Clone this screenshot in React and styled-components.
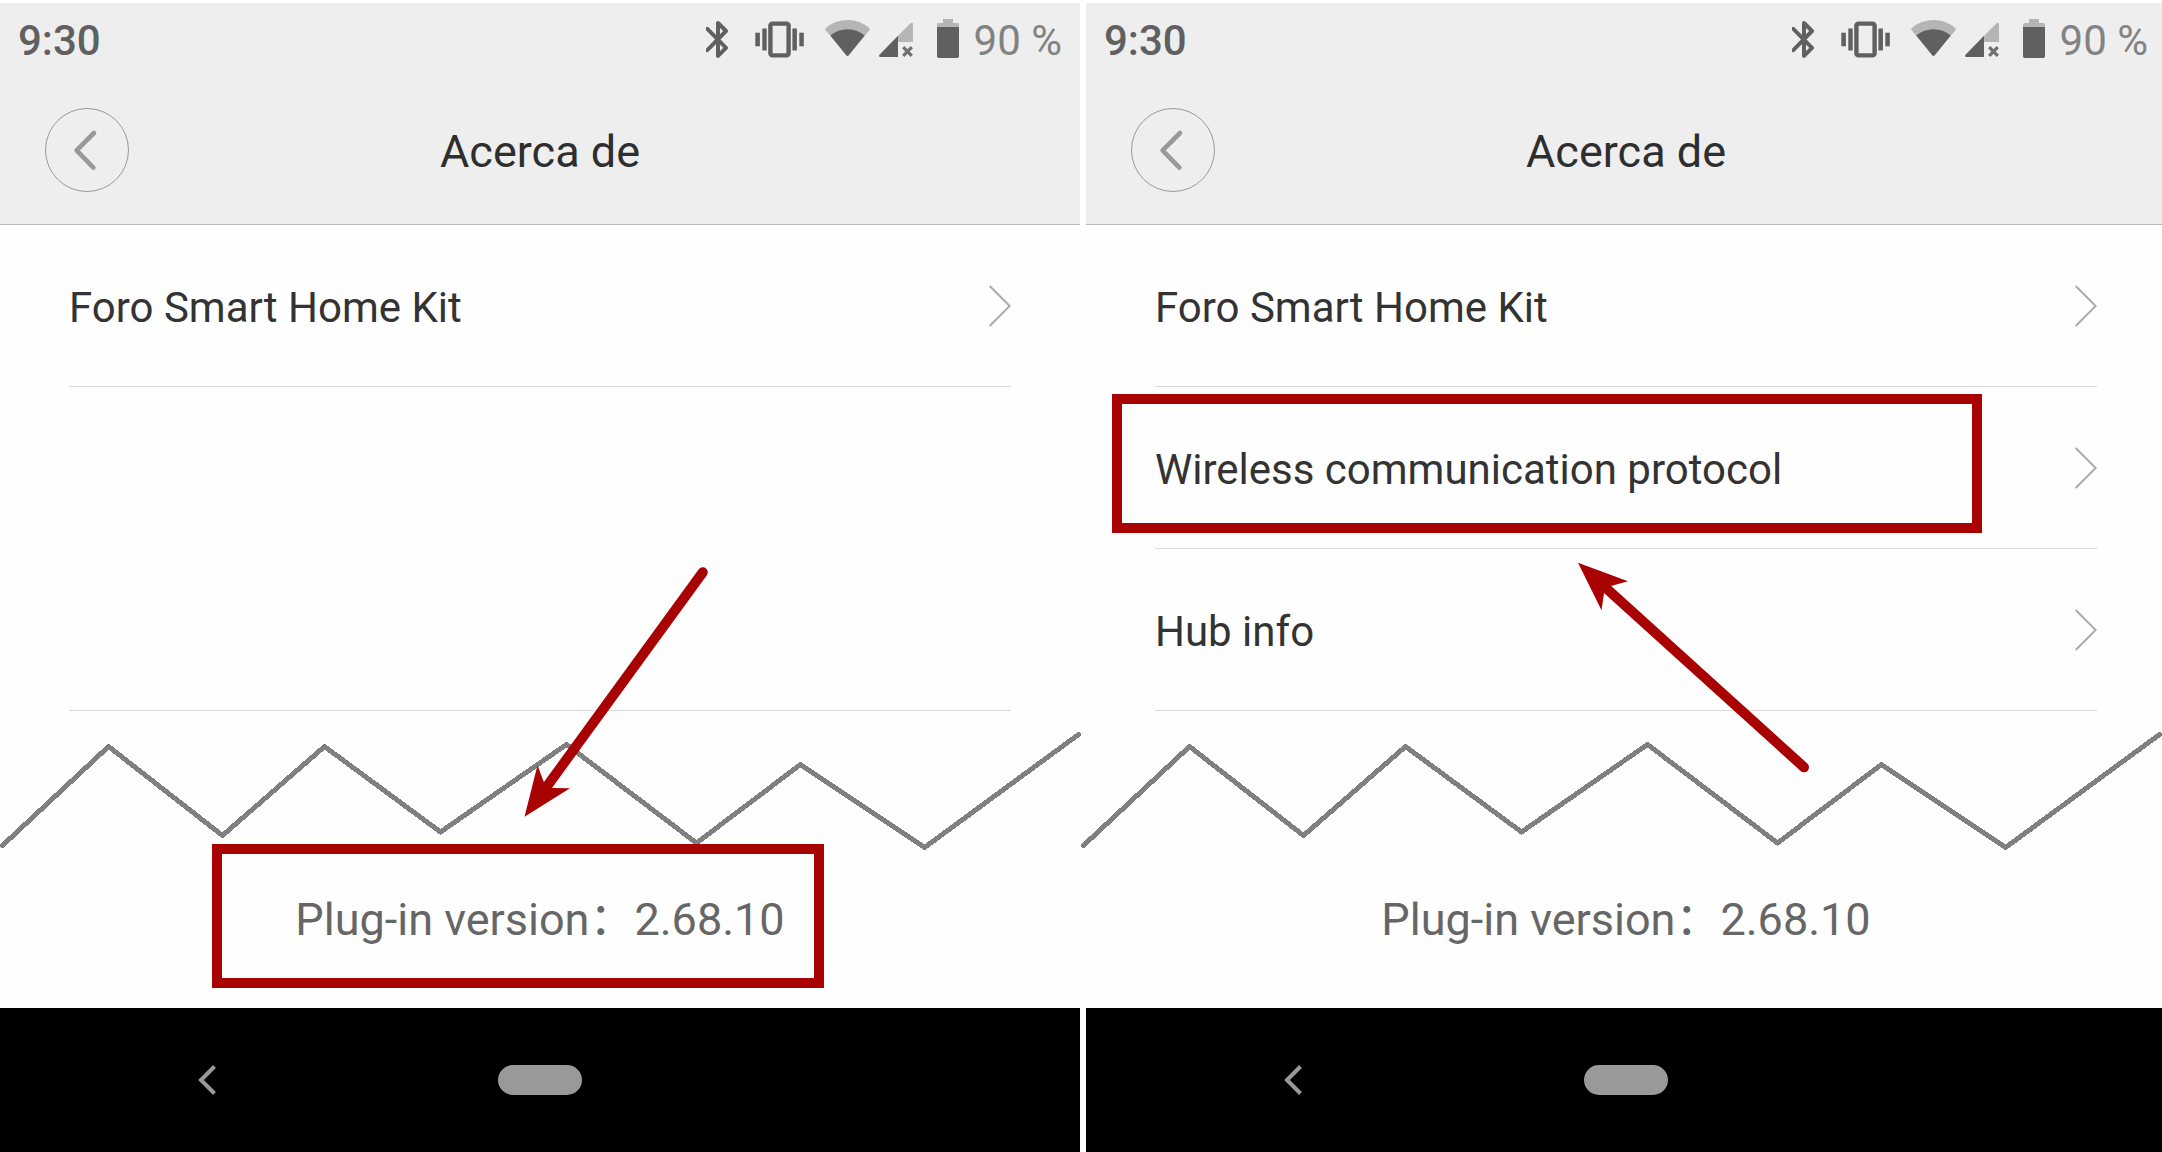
import React from "react";
import styled, { createGlobalStyle } from "styled-components";

const color = {
  bar: "#eeeeee",
  surface: "#fefefe",
  line: "#d9d9d9",
  icon: "#606060",
  iconSoft: "#b5b5b5",
  mark: "#a80202",
};

const GlobalStyle = createGlobalStyle`
  * { box-sizing: border-box; }
  body {
    margin: 0;
    background: #ffffff;
    font-family: Roboto, "Noto Sans CJK SC", sans-serif;
    overflow-x: hidden;
  }
`;

const Page = styled.main`
  display: grid;
  grid-template-columns: 1fr 1fr;
  gap: 6px;
  min-height: 100vh;
  margin-right: -4px;
  padding-top: 3px;
`;

const Phone = styled.section`
  display: flex;
  flex-direction: column;
  min-width: 0;
`;

const Header = styled.header`
  background: ${color.bar};
  border-bottom: 1px solid #bababa;
`;

const StatusBar = styled.div`
  display: flex;
  align-items: center;
  justify-content: space-between;
  height: 74px;
  padding: 0 18px;
  font-size: 42px;
  line-height: 50px;
`;

const Clock = styled.time`
  padding-top: 2px;
  color: ${color.icon};
  font-weight: 500;
`;

const Charge = styled.span`
  padding-top: 2px;
`;

const Indicators = styled.div`
  display: flex;
  align-items: center;
  gap: 8px;
  color: #828282;

  svg { display: block; }
`;

const TitleBar = styled.div`
  display: grid;
  grid-template-columns: 84px 1fr 84px;
  align-items: center;
  height: 147px;
  padding: 0 45px 2px;
`;

const BackButton = styled.button`
  display: flex;
  width: 84px;
  height: 84px;
  padding: 0;
  border: 1px solid #999999;
  border-radius: 50%;
  background: transparent;
  align-items: center;
  justify-content: center;
`;

const Title = styled.h1`
  margin: 0;
  padding-top: 4px;
  color: #2e2e2e;
  font-size: 45px;
  font-weight: 400;
  line-height: 54px;
  text-align: center;
`;

const Body = styled.div`
  position: relative;
  flex: 1;
  background: ${color.surface};
`;

const List = styled.ul`
  margin: 0;
  padding: 0 69px;
  list-style: none;
`;

const Item = styled.li`
  position: relative;
  height: ${(p) => (p.$rows || 1) * 162}px;
  border-bottom: 1px solid ${color.line};
`;

const ItemLink = styled.a`
  display: flex;
  align-items: center;
  justify-content: space-between;
  height: 100%;
  color: #333333;
  font-size: 42px;
  line-height: 50px;
  text-decoration: none;
`;

const ItemLabel = styled.span`
  padding-top: 4px;
`;

const Tear = styled.svg`
  display: block;
  width: 100%;
  overflow: visible;
`;

const Version = styled.div`
  position: relative;
  display: flex;
  align-items: center;
  justify-content: center;
  height: 164px;
  padding-bottom: 12px;
  color: #666666;
  font-size: 45px;
  line-height: 54px;
  white-space: nowrap;
`;

const Frame = styled.span`
  position: absolute;
  top: ${(p) => p.$top}px;
  left: ${(p) => p.$left}px;
  width: ${(p) => p.$width}px;
  height: ${(p) => p.$height}px;
  border: 10px solid ${color.mark};
  pointer-events: none;
`;

const Arrow = styled.svg`
  position: absolute;
  top: ${(p) => p.$top}px;
  left: ${(p) => p.$left}px;
  overflow: visible;
  pointer-events: none;
`;

const NavBar = styled.nav`
  display: flex;
  align-items: center;
  justify-content: space-between;
  height: 144px;
  padding: 0 180px;
  background: #000000;
`;

const NavButton = styled.button`
  display: flex;
  align-items: center;
  justify-content: center;
  width: 54px;
  height: 54px;
  padding: 0;
  border: 0;
  background: transparent;
`;

const HomePill = styled.button`
  width: 84px;
  height: 30px;
  padding: 0;
  border: 0;
  border-radius: 15px;
  background: #999999;
`;

const NavSpace = styled.span`
  width: 54px;
`;

function StatusIcons() {
  return (
    <>
      <svg width="29" height="42" viewBox="706 19 29 42" fill="none" stroke={color.icon} strokeWidth="4" strokeLinecap="round" strokeLinejoin="round">
        <path d="M707.3 28.8 L726 47.8 L718 55.8 V23 L726 31 L707.3 50.2" />
      </svg>
      <svg width="75" height="42" viewBox="743 19 75 42" fill={color.icon}>
        <rect x="770.4" y="23.6" width="18.2" height="31.8" rx="2" fill="none" stroke={color.icon} strokeWidth="4.4" />
        <rect x="762.3" y="28.5" width="4.4" height="22" />
        <rect x="755.3" y="32.7" width="4.6" height="13.6" />
        <rect x="792.4" y="28.5" width="4.5" height="22" />
        <rect x="799.3" y="32.7" width="4.5" height="13.6" />
      </svg>
      <svg width="46" height="42" viewBox="826 19 46 42" overflow="visible">
        <path d="M847.5 56 L825.6 30.2 Q824.6 28.9 825.9 28 Q835 20 847.5 20 Q860 20 869.1 28 Q870.6 28.9 869.4 30.2 Z" fill={color.iconSoft} />
        <path d="M830.3 35.6 Q838 29.3 847.5 29.3 Q857 29.3 864.7 35.6 L848.8 55.2 Q847.5 56.6 846.2 55.2 Z" fill={color.icon} />
      </svg>
      <svg width="34" height="42" viewBox="880 19 34 42" overflow="visible">
        <path d="M898 35.8 L910.6 23.3 Q913 22 913 24.5 V42 H898 Z" fill={color.iconSoft} />
        <path d="M898 35.8 V57 H880.3 Q878.3 56.6 879.5 54.8 Z" fill={color.icon} />
        <path d="M903.2 47.2 L911.8 55.8 M911.8 47.2 L903.2 55.8" stroke="#707070" strokeWidth="3.2" />
      </svg>
      <svg width="44" height="42" viewBox="922 19 44 42">
        <path d="M943 19 H953 V23 H957.4 Q959 23 959 24.6 V27 H937 V24.6 Q937 23 938.6 23 H943 Z" fill={color.iconSoft} />
        <path d="M937 27 H959 V56.2 Q959 58 957.2 58 H938.8 Q937 58 937 56.2 Z" fill={color.icon} />
      </svg>
    </>
  );
}

function ItemRow({ label, children }) {
  return (
    <Item>
      <ItemLink href="#">
        <ItemLabel>{label}</ItemLabel>
        <svg width="22" height="42" viewBox="0 0 22 42" fill="none" stroke="#aaaaaa" strokeWidth="2">
          <path d="M0.7 1 L20.7 21 L0.7 41" />
        </svg>
      </ItemLink>
      {children}
    </Item>
  );
}

function PhoneScreen({ list, tearShift = 0, versionMark, arrow }) {
  return (
    <Phone>
      <Header>
        <StatusBar>
          <Clock>9:30</Clock>
          <Indicators>
            <StatusIcons />
            <Charge>90 %</Charge>
          </Indicators>
        </StatusBar>
        <TitleBar>
          <BackButton aria-label="Back">
            <svg width="42" height="42" viewBox="0 0 42 42" fill="none" stroke="#999999" strokeWidth="4.6" strokeLinecap="round" strokeLinejoin="round">
              <path d="M28 4 L10.6 21.4 L27.4 38.6" />
            </svg>
          </BackButton>
          <Title>Acerca de</Title>
        </TitleBar>
      </Header>
      <Body>
        <List>{list}</List>
        <Tear viewBox={`${tearShift} 711 1080 133`} fill="none" stroke="#808080" strokeWidth="5" strokeLinecap="round" strokeLinejoin="round" shapeRendering="crispEdges">
          <path d="M2.5 845.5 L108.5 746.5 L222.5 835.5 L324.5 746.5 L440.5 832 L566.5 744.5 L696.5 843 L800.5 764.5 L924.5 847.5 L1078.5 734.5" />
        </Tear>
        <Version>
          <span>Plug-in version：2.68.10</span>
          {versionMark}
        </Version>
        {arrow}
      </Body>
      <NavBar>
        <NavButton aria-label="Back">
          <svg width="18" height="30" viewBox="0 0 18 30" fill="none" stroke="#999999" strokeWidth="4">
            <path d="M16.5 1.5 L3 15 L16.5 28.5" />
          </svg>
        </NavButton>
        <HomePill aria-label="Home" />
        <NavSpace />
      </NavBar>
    </Phone>
  );
}

export default function App() {
  return (
    <>
      <GlobalStyle />
      <Page>
        <PhoneScreen
          list={
            <>
              <ItemRow label="Foro Smart Home Kit" />
              <Item $rows={2} />
            </>
          }
          versionMark={<Frame $top={0} $left={212} $width={612} $height={144} />}
          arrow={
            <Arrow $top={342} $left={524} width="184" height="250" viewBox="524 567 184 250">
              <path d="M702.8 572.3 L545 789" stroke={color.mark} strokeWidth="10" strokeLinecap="round" />
              <path d="M524.5 816.8 L537.5 765.3 L543.6 781.5 L552 788 L570 788.3 Z" fill={color.mark} />
            </Arrow>
          }
        />
        <PhoneScreen
          tearShift={5}
          list={
            <>
              <ItemRow label="Foro Smart Home Kit" />
              <ItemRow label="Wireless communication protocol">
                <Frame $top={7} $left={-43} $width={870} $height={139} />
              </ItemRow>
              <ItemRow label="Hub info" />
            </>
          }
          arrow={
            <Arrow $top={337} $left={492} width="232" height="211" viewBox="1578 562 232 211">
              <path d="M1804 767.3 L1604 586.2" stroke={color.mark} strokeWidth="10" strokeLinecap="round" />
              <path d="M1578 562.7 L1628 581.3 L1611 586 L1604 593.3 L1601.5 610.3 Z" fill={color.mark} />
            </Arrow>
          }
        />
      </Page>
    </>
  );
}
